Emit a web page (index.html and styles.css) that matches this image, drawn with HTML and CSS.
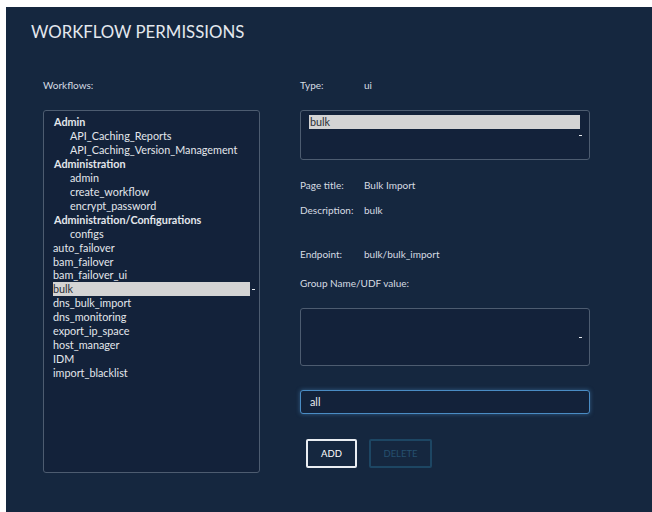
FILE: index.html
```html
<!DOCTYPE html>
<html lang="en">
<head>
<meta charset="utf-8">
<title>Workflow Permissions</title>
<link rel="stylesheet" href="styles.css">
</head>
<body>
<div class="panel">
  <h1 class="title">WORKFLOW PERMISSIONS</h1>
  <div class="columns">
    <div class="col-left">
      <div class="label">Workflows:</div>
      <div class="listbox">
        <ul class="list">
          <li class="group">Admin</li>
          <li class="child">API_Caching_Reports</li>
          <li class="child">API_Caching_Version_Management</li>
          <li class="group">Administration</li>
          <li class="child">admin</li>
          <li class="child">create_workflow</li>
          <li class="child">encrypt_password</li>
          <li class="group">Administration/Configurations</li>
          <li class="child">configs</li>
          <li>auto_failover</li>
          <li>bam_failover</li>
          <li>bam_failover_ui</li>
          <li class="selected">bulk<span class="tick"></span></li>
          <li>dns_bulk_import</li>
          <li>dns_monitoring</li>
          <li>export_ip_space</li>
          <li>host_manager</li>
          <li>IDM</li>
          <li>import_blacklist</li>
        </ul>
      </div>
    </div>
    <div class="col-right">
      <div class="field"><span class="label key">Type:</span><span class="label">ui</span></div>
      <div class="selectbox type-box">
        <div class="option selected">bulk</div>
        <span class="tick"></span>
      </div>
      <div class="field f-title"><span class="label key">Page title:</span><span class="label">Bulk Import</span></div>
      <div class="field f-desc"><span class="label key">Description:</span><span class="label">bulk</span></div>
      <div class="field f-end"><span class="label key">Endpoint:</span><span class="label">bulk/bulk_import</span></div>
      <div class="field f-group"><span class="label">Group Name/UDF value:</span></div>
      <div class="selectbox group-box">
        <span class="tick"></span>
      </div>
      <div class="input">all</div>
      <div class="actions">
        <button class="btn btn-add">ADD</button>
        <button class="btn btn-delete">DELETE</button>
      </div>
    </div>
  </div>
</div>
</body>
</html>
```
FILE: styles.css
```css
html, body {
  margin: 0;
  padding: 0;
  background: #ffffff;
}

body {
  font-family: Lato, "Open Sans", sans-serif;
  overflow: hidden;
}

.panel {
  margin: 7px 0 0 6px;
  height: 505px;
  background: #15273f;
  box-sizing: border-box;
  padding: 14px 0 0 25px;
  color: #dde2e8;
}

.title {
  margin: 0;
  font-family: Lato, "Open Sans", sans-serif;
  font-weight: 400;
  font-size: 16.8px;
  line-height: 22px;
  color: #e4e8ee;
}

.columns {
  display: grid;
  grid-template-columns: 217px 290px;
  column-gap: 40px;
  margin-top: 35px;
  margin-left: 12px;
}

.label {
  font-size: 10px;
  line-height: 14px;
  color: #d6dce3;
}

.listbox {
  margin-top: 18px;
  height: 363px;
  box-sizing: border-box;
  border: 1px solid #4d5c70;
  border-radius: 3px;
  background: #13223a;
  padding: 4px 9px 0 9px;
}

.list {
  list-style: none;
  margin: 0;
  padding: 0;
  font-size: 10.8px;
  line-height: 13.95px;
  color: #e3e7ec;
}

.list li {
  position: relative;
  white-space: nowrap;
}

.list .group {
  font-weight: 700;
  padding-left: 1px;
}

.list .child {
  padding-left: 17px;
}

.list .selected,
.option.selected {
  background: #d4d4d4;
  color: #2a2f36;
}

.tick {
  position: absolute;
  width: 3px;
  height: 1px;
  background: #e8ecf0;
}

.list .tick {
  right: -5px;
  top: 7px;
}

.field {
  display: flex;
  line-height: 14px;
}

.field .key {
  width: 64px;
  flex: none;
}

.selectbox {
  position: relative;
  box-sizing: border-box;
  border: 1px solid #4d5c70;
  border-radius: 3px;
  background: #13223a;
}

.type-box {
  margin-top: 18px;
  height: 50px;
  padding: 4px 9px 0 8px;
}

.option {
  font-size: 10.8px;
  line-height: 14px;
  padding-left: 1px;
}

.type-box .tick {
  right: 7px;
  top: 24px;
}

.f-title { margin-top: 18px; }
.f-desc { margin-top: 11px; }
.f-end { margin-top: 30px; }
.f-group { margin-top: 15px; }

.group-box {
  margin-top: 18px;
  height: 58px;
}

.group-box .tick {
  right: 7px;
  top: 28px;
}

.input {
  margin-top: 24px;
  height: 24px;
  box-sizing: border-box;
  border: 1px solid #4a8cc4;
  border-radius: 3px;
  background: #13223a;
  box-shadow: 0 0 4px rgba(74, 140, 196, 0.55);
  padding-left: 9px;
  font-size: 10.8px;
  line-height: 22px;
  color: #e6eaef;
}

.actions {
  display: flex;
  gap: 12px;
  margin-top: 25px;
  margin-left: 6px;
}

.btn {
  height: 29px;
  box-sizing: border-box;
  border-radius: 2px;
  background: transparent;
  font-family: Lato, "Open Sans", sans-serif;
  font-size: 9.5px;
  padding: 0;
}

.btn-add {
  width: 51px;
  border: 2px solid #e9edf2;
  color: #ffffff;
}

.btn-delete {
  width: 63px;
  border: 2px solid #1d4663;
  color: #25506f;
}
```
